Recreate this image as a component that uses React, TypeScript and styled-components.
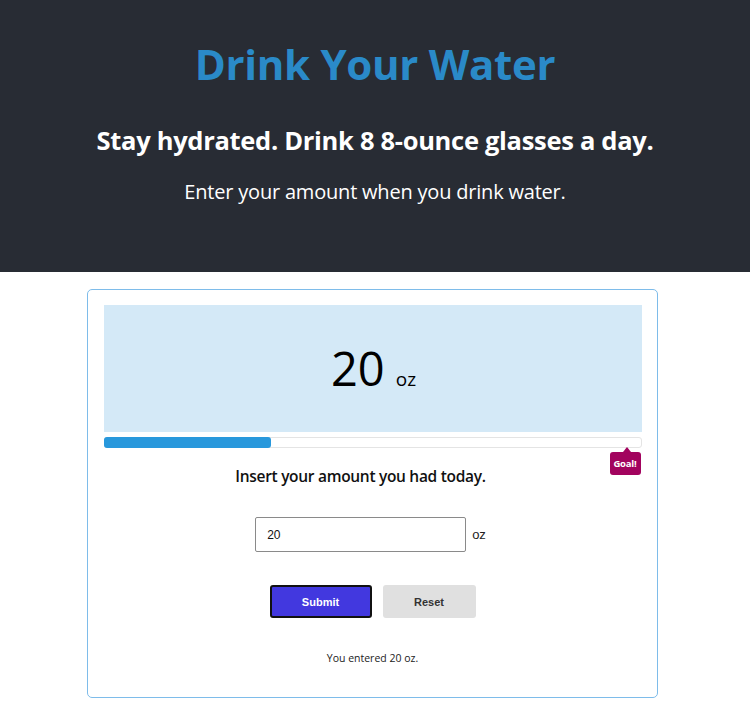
import React from "react";
import styled, { createGlobalStyle } from "styled-components";

const Global = createGlobalStyle`
  html, body { margin: 0; padding: 0; background: #ffffff; }
  body { font-family: "Open Sans", "Noto Sans", sans-serif; }
`;

const Header = styled.header`
  background: #282c34;
  height: 272px;
  display: flex;
  flex-direction: column;
  align-items: center;
  box-sizing: border-box;
  padding-top: 35px;
`;

const Title = styled.h1`
  margin: 0;
  color: #2a8ac8;
  font-size: 42px;
  font-weight: 700;
  line-height: 58px;
  letter-spacing: -0.3px;
`;

const Sub = styled.h2`
  margin: 30px 0 0;
  color: #ffffff;
  font-size: 25.5px;
  font-weight: 700;
  line-height: 34px;
  letter-spacing: -0.3px;
`;

const Lead = styled.p`
  margin: 21px 0 0;
  color: #ffffff;
  font-size: 20px;
  font-weight: 400;
  line-height: 28px;
  letter-spacing: -0.2px;
`;

const Main = styled.main`
  display: flex;
  justify-content: center;
  padding: 17px 6px 0 0;
`;

const Card = styled.section`
  width: 571px;
  height: 409px;
  box-sizing: border-box;
  border: 1px solid #7ebcea;
  border-radius: 5px;
  padding: 15px 15px 0 16px;
  display: flex;
  flex-direction: column;
  align-items: stretch;
`;

const Display = styled.div`
  height: 127px;
  background: #d4e9f7;
  display: flex;
  align-items: center;
  justify-content: center;
  gap: 11px;
  padding-left: 2px;
`;

const Amount = styled.span`
  font-size: 47px;
  color: #000;
  line-height: 1;
`;

const Unit = styled.span`
  font-size: 19px;
  color: #000;
  margin-top: 20px;
`;

const Track = styled.div`
  position: relative;
  margin-top: 5px;
  height: 11px;
  box-sizing: border-box;
  border: 1px solid #e4e4e4;
  border-radius: 3px;
  background: #fff;
`;

const Fill = styled.div`
  position: absolute;
  left: -1px;
  top: -1px;
  bottom: -1px;
  background: #2898dc;
  border-radius: 3px;
`;

const Goal = styled.div`
  position: absolute;
  right: 0;
  top: 14px;
  width: 31px;
  height: 23px;
  background: #a2035e;
  border-radius: 3px;
  color: #fff;
  font-size: 9.5px;
  font-weight: 700;
  letter-spacing: -0.2px;
  display: flex;
  align-items: center;
  justify-content: center;
  &::before {
    content: "";
    position: absolute;
    top: -5px;
    right: 10px;
    border-left: 4px solid transparent;
    border-right: 4px solid transparent;
    border-bottom: 5px solid #a2035e;
  }
`;

const Prompt = styled.p`
  margin: 16px 0 0;
  padding-right: 24px;
  text-align: center;
  font-size: 15.5px;
  font-weight: 600;
  color: #111;
  line-height: 24px;
  letter-spacing: -0.3px;
`;

const InputRow = styled.div`
  display: flex;
  justify-content: center;
  align-items: center;
  gap: 6px;
  margin-top: 29px;
  padding-right: 4px;
`;

const Field = styled.input`
  width: 211px;
  height: 35px;
  box-sizing: border-box;
  border: 1px solid #8a8a8a;
  border-radius: 2px;
  padding: 0 11px;
  font-family: "Liberation Sans", Arial, sans-serif;
  font-size: 12px;
  color: #111;
  outline: none;
`;

const FieldUnit = styled.span`
  font-family: "Liberation Sans", Arial, sans-serif;
  font-size: 13px;
  color: #222;
`;

const Buttons = styled.div`
  display: flex;
  justify-content: center;
  gap: 11px;
  margin-top: 33px;
`;

const Button = styled.button<{ $primary?: boolean }>`
  height: 33px;
  width: ${(p) => (p.$primary ? "102px" : "93px")};
  box-sizing: border-box;
  border: ${(p) => (p.$primary ? "2px solid #111" : "none")};
  border-radius: 3px;
  background: ${(p) => (p.$primary ? "#4238df" : "#e0e0e0")};
  color: ${(p) => (p.$primary ? "#ffffff" : "#333")};
  font-family: "Liberation Sans", Arial, sans-serif;
  font-size: 11px;
  font-weight: 700;
  cursor: pointer;
`;

const Note = styled.p`
  margin: 32px 0 0;
  text-align: center;
  font-size: 10.5px;
  color: #222;
  line-height: 16px;
`;

export default function App() {
  const amount = 20;
  const goal = 64;
  const pct = Math.min(100, (amount / goal) * 100);
  return (
    <>
      <Global />
      <Header>
        <Title>Drink Your Water</Title>
        <Sub>Stay hydrated. Drink 8 8-ounce glasses a day.</Sub>
        <Lead>Enter your amount when you drink water.</Lead>
      </Header>
      <Main>
        <Card>
          <Display>
            <Amount>{amount}</Amount>
            <Unit>oz</Unit>
          </Display>
          <Track>
            <Fill style={{ width: `${pct}%` }} />
            <Goal>Goal!</Goal>
          </Track>
          <Prompt>Insert your amount you had today.</Prompt>
          <InputRow>
            <Field defaultValue="20" />
            <FieldUnit>oz</FieldUnit>
          </InputRow>
          <Buttons>
            <Button $primary>Submit</Button>
            <Button>Reset</Button>
          </Buttons>
          <Note>You entered 20 oz.</Note>
        </Card>
      </Main>
    </>
  );
}
